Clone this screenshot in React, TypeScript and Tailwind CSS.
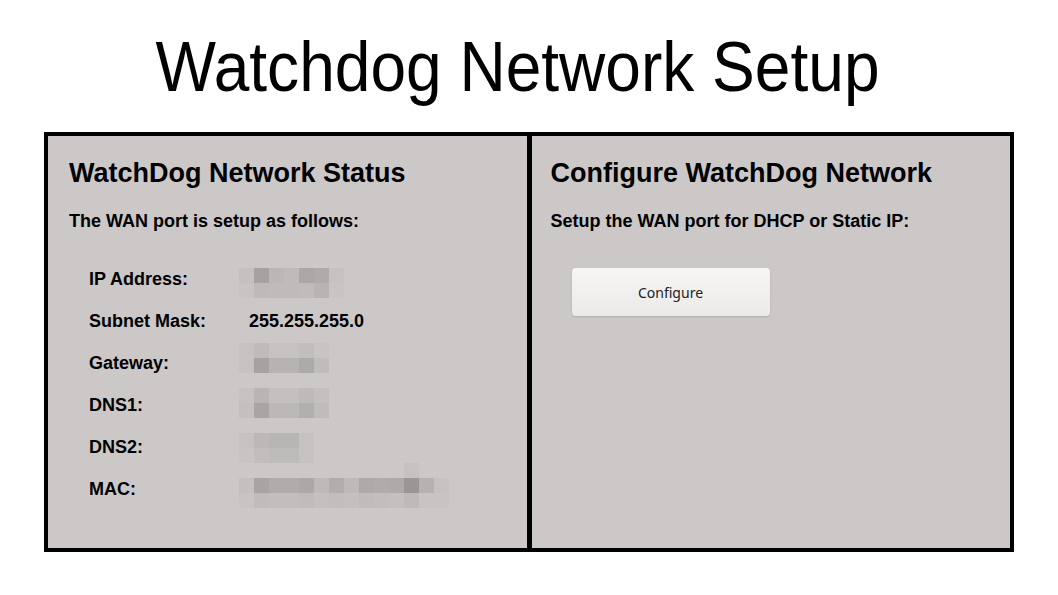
import React from 'react';

type Row = { label: string; value?: string; shift?: string; top?: string[]; bottom?: string[]; above?: number };

// pixelated (redacted) values, 15px blocks
const rows: Row[] = [
  {
    label: 'IP Address:',
    shift: 'translate-y-[4px]',
    top: ['#c6c1c1', '#a6a2a2', '#bcb7b7', '#c0bbbb', '#aba7a7', '#b0abab', '#c6c2c2'],
    bottom: ['#c8c4c4', '#bfbaba', '#c0bbbb', '#c0bbbb', '#c1bcbc', '#b8b4b4', '#c8c4c4'],
  },
  { label: 'Subnet Mask:', value: '255.255.255.0' },
  {
    label: 'Gateway:',
    shift: '-translate-y-[5px]',
    top: ['#c6c2c2', '#bfbbbb', '#c6c2c2', '#c6c2c2', '#c2bebe', '#c8c4c4'],
    bottom: ['#c6c2c2', '#a6a2a2', '#b8b3b3', '#b8b3b3', '#adaaaa', '#c0bcbc'],
  },
  {
    label: 'DNS1:',
    shift: '-translate-y-[2px]',
    top: ['#c6c2c2', '#b9b5b5', '#c4c0c0', '#c4c0c0', '#bebaba', '#c4c0c0'],
    bottom: ['#c4c0c0', '#a9a5a5', '#bcb8b8', '#bcb8b8', '#b2afaf', '#c0bcbc'],
  },
  {
    label: 'DNS2:',
    shift: 'translate-y-[1px]',
    top: ['#c6c2c2', '#bcb8b8', '#b8b5b5', '#b8b5b5', '#c6c2c2'],
    bottom: ['#c8c4c4', '#c2bebe', '#bebbbb', '#bebbbb', '#c6c2c2'],
  },
  {
    label: 'MAC:',
    shift: 'translate-y-[4px]',
    above: 11,
    top: ['#c4c0c0', '#a8a4a4', '#b0acac', '#b0acac', '#aca8a8', '#bebaba', '#b2aeae', '#bebaba', '#aeaaaa', '#b0acac', '#aeaaaa', '#9a9696', '#b6b2b2', '#c6c2c2'],
    bottom: ['#c8c4c4', '#c0bcbc', '#c2bebe', '#c2bebe', '#c0bcbc', '#c4c0c0', '#c2bebe', '#c4c0c0', '#c0bcbc', '#c2bebe', '#c4c0c0', '#bebaba', '#c8c4c4', '#c8c4c4'],
  },
];

function Mosaic({ top, bottom, shift, above }: { top: string[]; bottom: string[]; shift?: string; above?: number }) {
  return (
    <div className={`relative flex flex-col ${shift ?? ''}`}>
      {above !== undefined && (
        <div className="absolute -top-[15px] left-0 flex">
          <div className="h-[15px] bg-[#c6c2c2] w-[15px]" style={{ marginLeft: above * 15 }} />
        </div>
      )}
      <div className="flex">
        {top.map((c, i) => (
          <div key={i} className="w-[15px] h-[15px]" style={{ backgroundColor: c }} />
        ))}
      </div>
      <div className="flex">
        {bottom.map((c, i) => (
          <div key={i} className="w-[15px] h-[15px]" style={{ backgroundColor: c }} />
        ))}
      </div>
    </div>
  );
}

export default function App() {
  return (
    <div className="min-h-screen bg-white text-black font-['Liberation_Sans',Arial,sans-serif]">
      <h1 className="pt-[23px] h-[132px] text-center text-[70px] leading-[88px] pr-[22px]">
        <span className="inline-block scale-x-[0.915]">Watchdog Network Setup</span>
      </h1>

      <div className="mx-auto w-[970px] h-[420px] bg-black p-[4px] grid grid-cols-2 gap-[5px]">
        {/* Left: status */}
        <div className="bg-[#ccc8c7] px-[21px] pt-[21px]">
          <h2 className="text-[27px] font-bold leading-[32px]">WatchDog Network Status</h2>
          <p className="mt-[21px] text-[18px] font-bold leading-[22px]">The WAN port is setup as follows:</p>

          <div className="mt-[26px] pl-[20px] flex flex-col">
            {rows.map((r) => (
              <div key={r.label} className="flex items-center h-[42px]">
                <span className="w-[150px] text-[18px] font-bold">{r.label}</span>
                {r.value ? (
                  <span className="pl-[10px] text-[18px] font-bold">{r.value}</span>
                ) : (
                  <Mosaic top={r.top!} bottom={r.bottom!} shift={r.shift} above={r.above} />
                )}
              </div>
            ))}
          </div>
        </div>

        {/* Right: configure */}
        <div className="bg-[#ccc8c7] px-[19px] pt-[21px]">
          <h2 className="text-[27px] font-bold leading-[32px]">Configure WatchDog Network</h2>
          <p className="mt-[21px] text-[18px] font-bold leading-[22px]">Setup the WAN port for DHCP or Static IP:</p>

          <button className="mt-[36px] ml-[21px] w-[198px] h-[48px] rounded-[4px] bg-gradient-to-b from-[#f7f6f5] to-[#eceae8] shadow-[0_1px_2px_rgba(0,0,0,0.15)] text-[14px] text-[#222] font-['Noto_Sans',sans-serif]">
            Configure
          </button>
        </div>
      </div>
    </div>
  );
}
